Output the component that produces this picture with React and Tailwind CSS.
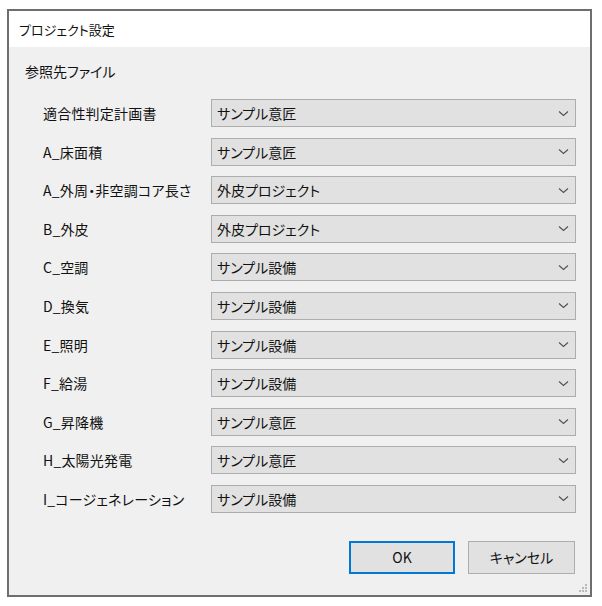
import React from "react";

const rows = [
  ["適合性判定計画書", "サンプル意匠"],
  ["A_床面積", "サンプル意匠"],
  ["A_外周・非空調コア長さ", "外皮プロジェクト"],
  ["B_外皮", "外皮プロジェクト"],
  ["C_空調", "サンプル設備"],
  ["D_換気", "サンプル設備"],
  ["E_照明", "サンプル設備"],
  ["F_給湯", "サンプル設備"],
  ["G_昇降機", "サンプル意匠"],
  ["H_太陽光発電", "サンプル意匠"],
  ["I_コージェネレーション", "サンプル設備"],
];

function Chevron() {
  return (
    <svg width="11" height="7" viewBox="0 0 11 7" className="shrink-0">
      <path d="M1 1.5 L5.5 5.5 L10 1.5" fill="none" stroke="#505050" strokeWidth="1.1" />
    </svg>
  );
}

function Grip() {
  const dots = [
    [6, 0],
    [3, 3],
    [6, 3],
    [0, 6],
    [3, 6],
    [6, 6],
  ];
  return (
    <svg width="8" height="8" viewBox="0 0 8 8" className="absolute right-[3px] bottom-[3px]">
      {dots.map(([x, y], i) => (
        <rect key={i} x={x} y={y} width="2" height="2" fill="#b8b8b8" />
      ))}
    </svg>
  );
}

export default function App() {
  return (
    <div
      className="w-[602px] h-[606px] bg-white pt-[9px] pl-[7px] text-[#111] [font-feature-settings:'palt']"
      style={{ fontFamily: '"Noto Sans CJK JP", "Noto Sans", sans-serif' }}
    >
      <div className="relative w-[585px] h-[588px] border-2 border-[#6e6e6e] flex flex-col bg-[#f0f0f0]">
        <div className="h-[36px] bg-white flex items-center pl-[10px] text-[13px] leading-none">
          プロジェクト設定
        </div>
        <div className="flex-1 flex flex-col">
          <div className="pl-[16px] mt-[14px] text-[14px] leading-[20px]">参照先ファイル</div>
          <div className="mt-[18px] flex flex-col gap-[10.6px]">
            {rows.map(([label, value]) => (
              <div key={label} className="flex items-center h-[28px]">
                <div className="w-[202px] pl-[34px] text-[14px] tracking-[0.2px] leading-none whitespace-nowrap">
                  {label}
                </div>
                <div className="w-[365px] h-[28px] bg-[#e1e1e1] border border-[#adadad] flex items-center justify-between pl-[5px] pr-[6px] text-[14px] leading-none">
                  <span>{value}</span>
                  <Chevron />
                </div>
              </div>
            ))}
          </div>
          <div className="mt-[28px] flex justify-end gap-[13px] pr-[15px]">
            <button className="w-[106px] h-[33px] bg-[#e1e1e1] border-2 border-[#0078d7] text-[14px] leading-none flex items-center justify-center">
              OK
            </button>
            <button className="w-[107px] h-[33px] bg-[#e1e1e1] border border-[#adadad] text-[14px] leading-none flex items-center justify-center">
              キャンセル
            </button>
          </div>
        </div>
        <Grip />
      </div>
    </div>
  );
}
